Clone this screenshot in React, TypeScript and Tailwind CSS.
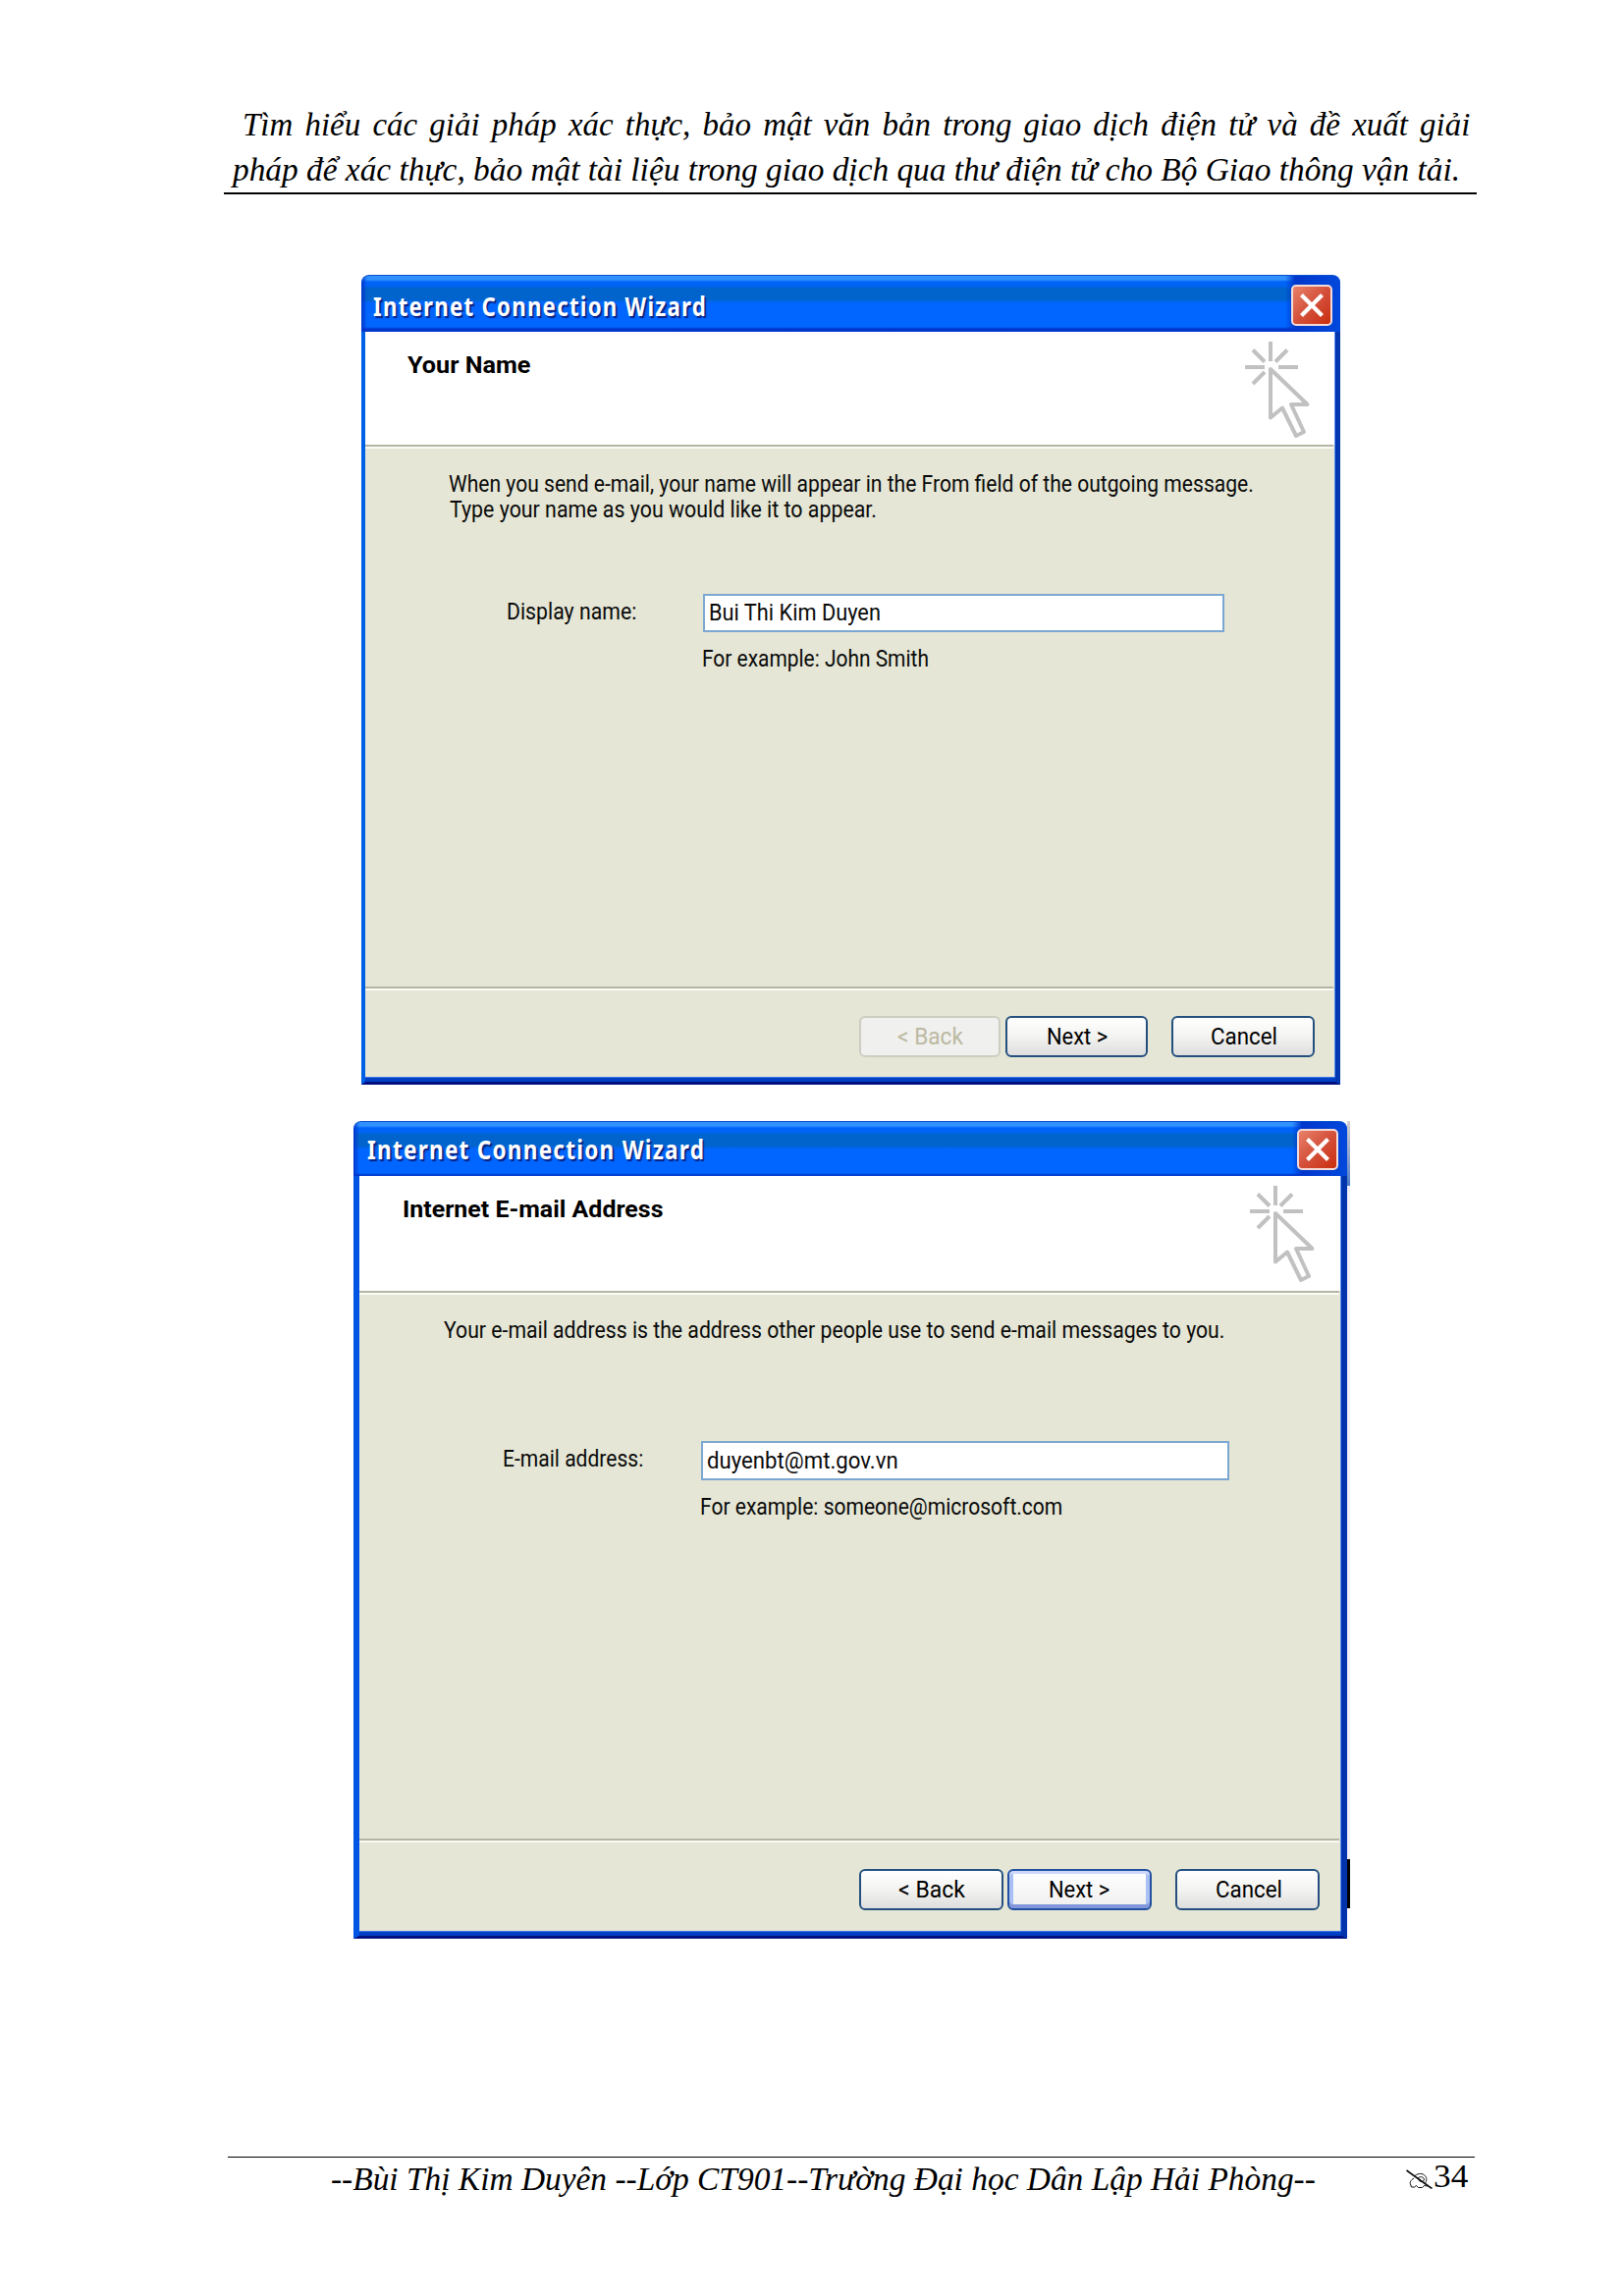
import { useLayoutEffect, useRef, useState, type ReactNode } from "react";

/** Single line of text squeezed or stretched horizontally to fill its box. */
function Fit({ className, children }: { className: string; children: ReactNode }) {
  const box = useRef<HTMLDivElement>(null);
  const text = useRef<HTMLSpanElement>(null);
  const [scale, setScale] = useState(1);
  useLayoutEffect(() => {
    if (box.current && text.current) {
      setScale(box.current.clientWidth / text.current.offsetWidth);
    }
  }, []);
  return (
    <div ref={box} className={"shrink-0 whitespace-nowrap " + className}>
      <span ref={text} className="inline-block origin-left" style={{ transform: `scaleX(${scale})` }}>
        {children}
      </span>
    </div>
  );
}

function CursorArt({ className }: { className: string }) {
  return (
    <svg viewBox="0 0 68 100" className={"h-[100px] w-[68px] shrink-0 " + className} fill="none" stroke="#c1c1c1" strokeWidth="4">
      <path d="M27 1v20M1 27h20M35 27h20M9 9.500l12 12M44 9.500l-12 12M9 44l12-12" />
      <path d="M27 29v49.500l12-10L53 97l8-4-13-28h16.500L27 29z" strokeLinejoin="round" />
    </svg>
  );
}

function CloseButton() {
  return (
    <div className="flex h-[42px] w-[42px] shrink-0 items-center justify-center rounded-[5px] border-2 border-[#f3dcd8] bg-linear-to-br from-[#e8806a] via-[#d4503a] to-[#c92c06]">
      <svg viewBox="0 0 24 24" className="h-6 w-6" stroke="#fff" strokeWidth="4.200" strokeLinecap="butt">
        <path d="M1.500 1.500l21 21M22.500 1.500l-21 21" />
      </svg>
    </div>
  );
}

function TitleBar({ className, textClass }: { className: string; textClass: string }) {
  return (
    <div className={"flex justify-between overflow-hidden rounded-t-[8px] border-t border-[#0a50d0] bg-[linear-gradient(to_right,#0037cc_0px,transparent_6px,transparent_calc(100%-56px),#0037cc_calc(100%-46px),#0048dc_100%),linear-gradient(to_bottom,#3091ff_0px,#3091ff_4px,#0064fb_6px,#0064f6_10px,#0064cc_13px,#0064cc_24px,#0066ff_28px,#0066ff_52px,#0037cc_54px)] " + className}>
      <Fit className={"h-[36px] font-['Noto_Sans'] text-[27px] leading-[36px] font-bold tracking-[1.500px] text-white [text-shadow:2px_2px_1px_#0a2080] " + textClass}>Internet Connection Wizard</Fit>
      <CloseButton />
    </div>
  );
}

function Divider() {
  return <div className="mr-[2px] h-[4px] shrink-0 border-t-2 border-b-2 border-t-[#b5b5a6] border-b-[#fbfbf5]" />;
}

const buttonKinds = {
  normal: "border-[#24507f] bg-linear-to-b from-white via-[#f3f3f1] to-[#dedede] text-black",
  focus: "border-[#2350a0] bg-linear-to-b from-white to-[#efefef] text-black shadow-[inset_0_3px_0_#ced8fa,inset_0_-4px_0_#8298dc,inset_4px_0_0_#a9c0f4,inset_-4px_0_0_#a9c0f4]",
  disabled: "border-[#cdcdc2] bg-[#f0f0ee] text-[#bcb9a2]",
};

function Button({ kind, className, textClass, children }: { kind: keyof typeof buttonKinds; className: string; textClass: string; children: ReactNode }) {
  return (
    <div className={"flex h-[42px] shrink-0 items-start rounded-[6px] border-2 pt-[5px] " + buttonKinds[kind] + " " + className}>
      <Fit className={"h-[28px] leading-[28px] " + textClass}>{children}</Fit>
    </div>
  );
}

function NameWindow() {
  return (
    <section className="mt-[82px] ml-[368px] flex h-[825px] w-[997px] flex-col font-['Roboto'] text-[24px] text-[#0a0a0a]">
      <TitleBar className="h-[58px] pt-[9px] pr-[8px]" textClass="ml-[12px] mt-[4px] w-[340px]" />
      <div className="flex h-[767px] flex-col border-r-[5px] border-b-[3px] border-l-[4px] border-r-[#0036ae] border-b-[#000f80] border-l-[#0060e6] bg-[#e5e6d5] shadow-[inset_0_-4px_0_#0040c4,inset_0_-5px_0_#3878e8,inset_-1px_0_0_#5a90ee]">
        <div className="mr-px flex h-[115px] shrink-0 justify-between bg-white">
          <Fit className="mt-[20px] ml-[43px] h-[28px] w-[125px] leading-[28px] font-bold text-black">Your Name</Fit>
          <CursorArt className="mt-[9px] mr-[24px]" />
        </div>
        <Divider />
        <Fit className="mt-[22px] ml-[85px] h-[26px] w-[820px] leading-[28px]">When you send e-mail, your name will appear in the From field of the outgoing message.</Fit>
        <Fit className="ml-[86px] h-[26px] w-[435px] leading-[28px]">Type your name as you would like it to appear.</Fit>
        <div className="mt-[74px] flex shrink-0">
          <Fit className="mt-[4px] ml-[144px] h-[28px] w-[132px] leading-[28px]">Display name:</Fit>
          <div className="ml-[68px] h-[39px] w-[531px] border-2 border-[#7ba7d2] bg-white pt-[3px] pl-[4px]">
            <Fit className="h-[28px] w-[175px] leading-[28px]">Bui Thi Kim Duyen</Fit>
          </div>
        </div>
        <Fit className="mt-[13px] ml-[343px] h-[28px] w-[231px] leading-[28px]">For example: John Smith</Fit>
        <div className="mt-auto">
          <Divider />
        </div>
        <div className="flex h-[93px] shrink-0 pt-[26px]">
          <Button kind="disabled" className="ml-[503px] w-[144px]" textClass="ml-[37px] w-[67px]">&lt; Back</Button>
          <Button kind="normal" className="ml-[5px] w-[145px]" textClass="ml-[40px] w-[62px]">Next &gt;</Button>
          <Button kind="normal" className="ml-[24px] w-[146px]" textClass="ml-[38px] w-[68px]">Cancel</Button>
        </div>
      </div>
    </section>
  );
}

function EmailWindow() {
  return (
    <section className="mt-[37px] ml-[360px] flex font-['Roboto'] text-[24px] text-[#0a0a0a]">
      <div className="flex h-[833px] w-[1012px] flex-col bg-white">
        <TitleBar className="h-[56px] pt-[7px] pr-[9px]" textClass="ml-[14px] mt-[3px] w-[344px]" />
        <div className="flex h-[777px] flex-col border-r-[6px] border-b-[3px] border-l-[6px] border-r-[#0034ac] border-b-[#000f80] border-l-[#0055e4] bg-[#e5e6d5] shadow-[inset_0_-4px_0_#0040c4,inset_0_-5px_0_#3878e8,inset_-1px_0_0_#5a90ee]">
          <div className="mr-px flex h-[117px] shrink-0 justify-between bg-white">
            <Fit className="mt-[20px] ml-[44px] h-[28px] w-[265px] leading-[28px] font-bold text-black">Internet E-mail Address</Fit>
            <CursorArt className="mt-[9px] mr-[25px]" />
          </div>
          <Divider />
          <Fit className="mt-[22px] ml-[86px] h-[28px] w-[795px] leading-[28px]">Your e-mail address is the address other people use to send e-mail messages to you.</Fit>
          <div className="mt-[99px] flex shrink-0">
            <Fit className="mt-[4px] ml-[146px] h-[28px] w-[143px] leading-[28px]">E-mail address:</Fit>
            <div className="ml-[59px] h-[40px] w-[538px] border-2 border-[#7ba7d2] bg-white pt-[4px] pl-[4px]">
              <Fit className="h-[28px] w-[195px] leading-[28px]">duyenbt@mt.gov.vn</Fit>
            </div>
          </div>
          <Fit className="mt-[13px] ml-[347px] h-[28px] w-[369px] leading-[28px]">For example: someone@microsoft.com</Fit>
          <div className="mt-auto">
            <Divider />
          </div>
          <div className="flex h-[95px] shrink-0 pt-[27px]">
            <Button kind="normal" className="ml-[509px] w-[147px]" textClass="ml-[38px] w-[68px]">&lt; Back</Button>
            <Button kind="focus" className="ml-[4px] w-[147px]" textClass="ml-[40px] w-[62px]">Next &gt;</Button>
            <Button kind="normal" className="ml-[24px] w-[147px]" textClass="ml-[39px] w-[68px]">Cancel</Button>
          </div>
        </div>
      </div>
      <div className="flex w-[3px] flex-col">
        <div className="h-[66px] bg-linear-to-b from-[#d8d0cc] to-[#4a7cc8]" />
        <div className="h-[686px] bg-[#f0f0f6]" />
        <div className="h-[50px] bg-black" />
      </div>
    </section>
  );
}

function WritingHand() {
  return (
    <svg viewBox="0 0 27 20" className="mt-[2px] h-[20px] w-[27px] shrink-0" fill="none" stroke="#111" strokeWidth="1">
      <path d="M0.500 1l23 16.500 3 2" strokeWidth="1.600" />
      <path d="M9 6.500C13 3.500 17 4 19.500 6.500c2 2.500 1.500 5.500 0 7.500M8 9c-3 2-4.500 4-3.500 6l1 3h3l2-1.500 2 2h4l2-2 3 .5M12 9c2-2 5-1.500 6 0s0 3.500-2 3.500-3-1-3-2.500" />
    </svg>
  );
}

export default function App() {
  return (
    <main className="flex h-[2339px] w-[1654px] flex-col overflow-hidden bg-white text-black">
      <header className="mt-[104px] ml-[228px] h-[94px] w-[1276px] border-b-2 border-black font-['Liberation_Serif'] text-[33.300px] leading-[46px] italic">
        <Fit className="ml-[19px] h-[46px] w-[1250px] [word-spacing:4px]">Tìm hiểu các giải pháp xác thực, bảo mật văn bản trong giao dịch điện tử và đề xuất giải</Fit>
        <Fit className="ml-[9px] h-[46px] w-[1250px]">pháp để xác thực, bảo mật tài liệu trong giao dịch qua thư điện tử cho Bộ Giao thông vận tải.</Fit>
      </header>
      <NameWindow />
      <EmailWindow />
      <footer className="mt-[222px] ml-[232px] flex w-[1270px] border-t border-black pt-px font-['Liberation_Serif'] text-[33.300px] leading-[40px]">
        <Fit className="mt-px ml-[105px] h-[40px] w-[1003px] italic">--Bùi Thị Kim Duyên --Lớp CT901--Trường Đại học Dân Lập Hải Phòng--</Fit>
        <div className="ml-[92px] flex pt-[9px]">
          <WritingHand />
          <Fit className="-mt-[11px] ml-[1px] h-[40px] w-[35px]">34</Fit>
        </div>
      </footer>
    </main>
  );
}
